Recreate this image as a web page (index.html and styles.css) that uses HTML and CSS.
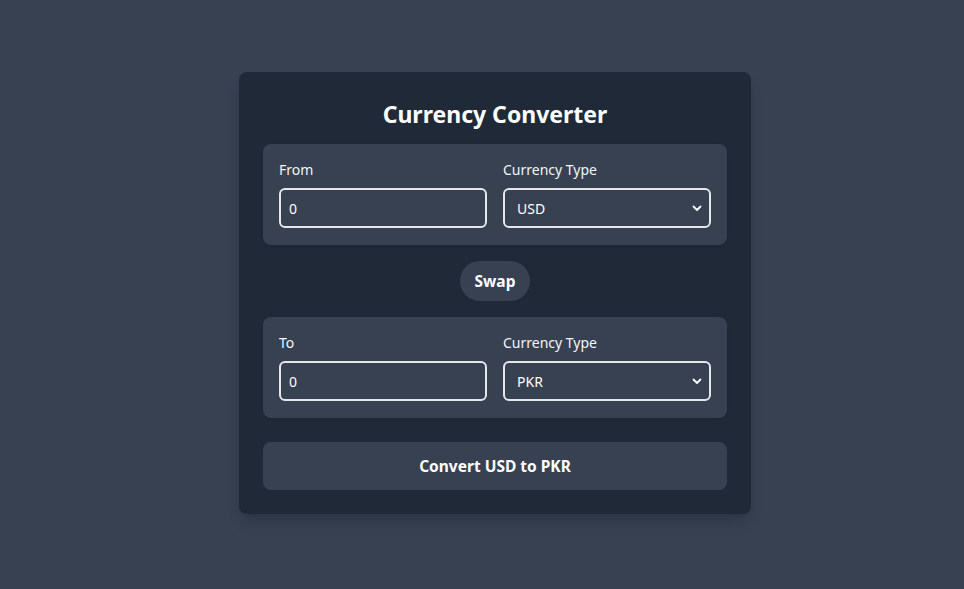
FILE: index.html
```html
<!DOCTYPE html>
<html lang="en">
<head>
<meta charset="utf-8">
<title>Currency Converter</title>
<link rel="stylesheet" href="styles.css">
</head>
<body>
<main class="page">
  <section class="card">
    <h1 class="title">Currency Converter</h1>
    <div class="panel">
      <div class="field">
        <label class="label">From</label>
        <input class="input" type="number" value="0">
      </div>
      <div class="field">
        <label class="label">Currency Type</label>
        <div class="select-wrap">
          <select class="select"><option>USD</option><option>PKR</option></select>
          <svg class="chev" width="10" height="7" viewBox="0 0 10 7"><path d="M1.5 1.5 L5 5 L8.5 1.5" fill="none" stroke="#fff" stroke-width="1.8" stroke-linecap="round" stroke-linejoin="round"/></svg>
        </div>
      </div>
    </div>
    <div class="swap-row"><button class="swap">Swap</button></div>
    <div class="panel">
      <div class="field">
        <label class="label">To</label>
        <input class="input" type="number" value="0">
      </div>
      <div class="field">
        <label class="label">Currency Type</label>
        <div class="select-wrap">
          <select class="select"><option>PKR</option><option>USD</option></select>
          <svg class="chev" width="10" height="7" viewBox="0 0 10 7"><path d="M1.5 1.5 L5 5 L8.5 1.5" fill="none" stroke="#fff" stroke-width="1.8" stroke-linecap="round" stroke-linejoin="round"/></svg>
        </div>
      </div>
    </div>
    <button class="convert">Convert USD to PKR</button>
  </section>
</main>
</body>
</html>
```

FILE: styles.css
```css
* { box-sizing: border-box; }
html, body { margin: 0; padding: 0; }
body {
  background: #374151;
  font-family: "Noto Sans", "Open Sans", sans-serif;
  color: #ffffff;
  min-height: 589px;
}
.page {
  display: flex;
  justify-content: center;
  padding-top: 72px;
  padding-left: 26px;
}
.card {
  width: 512px;
  background: #1f2937;
  border-radius: 8px;
  padding: 24px;
  box-shadow: 0 10px 15px -3px rgba(0,0,0,0.15), 0 4px 6px -4px rgba(0,0,0,0.15);
}
.title {
  margin: 0 0 14px;
  padding-top: 2px;
  font-size: 23px;
  line-height: 32px;
  font-weight: 700;
  text-align: center;
}
.panel {
  background: #374151;
  border-radius: 8px;
  padding: 16px 16px 17px;
  display: grid;
  grid-template-columns: 1fr 1fr;
  column-gap: 16px;
  box-shadow: 0 1px 3px rgba(0,0,0,0.1);
}
.field { display: flex; flex-direction: column; }
.label {
  font-size: 14px;
  line-height: 20px;
  margin-bottom: 8px;
  color: #f3f4f6;
}
.input, .select {
  height: 40px;
  width: 100%;
  background: transparent;
  border: 2px solid #e5e7eb;
  border-radius: 6px;
  color: #ffffff;
  font-family: inherit;
  font-size: 14px;
  padding: 0 8px;
  outline: none;
}
.input::-webkit-inner-spin-button { -webkit-appearance: none; }
.select-wrap { position: relative; }
.select {
  -webkit-appearance: none;
  appearance: none;
  padding-left: 12px;
}
.select option { background: #374151; }
.chev {
  position: absolute;
  right: 9px;
  top: 17px;
  pointer-events: none;
}
.swap-row {
  display: flex;
  justify-content: center;
  margin: 16px 0;
}
.swap {
  height: 40px;
  padding: 0 15px;
  border: none;
  border-radius: 9999px;
  background: #374151;
  color: #fff;
  font-family: inherit;
  font-size: 15.5px;
  font-weight: 700;
}
.convert {
  display: block;
  width: 100%;
  margin-top: 24px;
  height: 48px;
  border: none;
  border-radius: 8px;
  background: #374151;
  color: #fff;
  font-family: inherit;
  font-size: 15.5px;
  font-weight: 700;
}
```
